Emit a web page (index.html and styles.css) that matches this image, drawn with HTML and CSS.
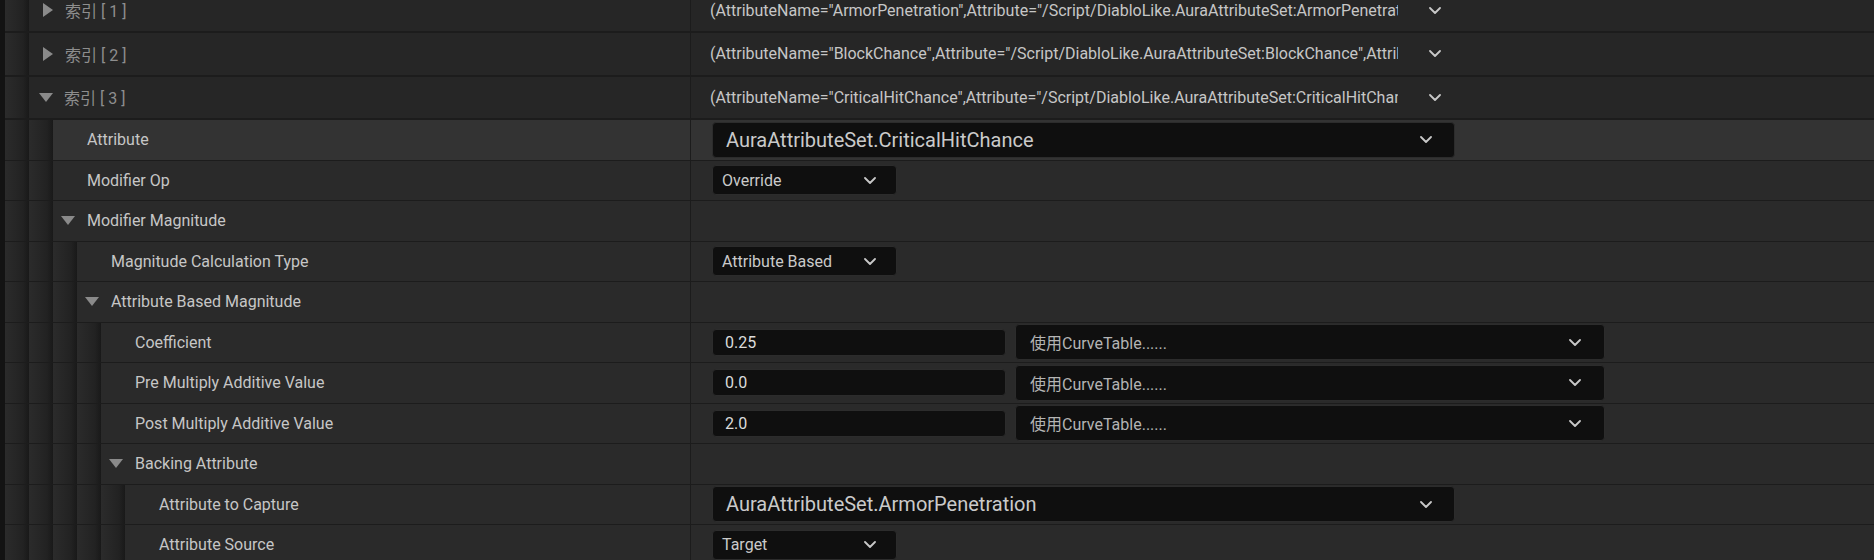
FILE: index.html
```html
<!DOCTYPE html>
<html lang="zh">
<head>
<meta charset="utf-8">
<title>Details</title>
<link rel="stylesheet" href="styles.css">
</head>
<body>
<div class="panel">
  <div class="strip"></div>
  <div class="list">

    <div class="row top">
      <div class="name"><span class="ind"></span><span class="tri-r"></span><span class="label idx">索引 [ 1 ]</span></div>
      <div class="value top-value">
        <div class="summary"><span class="sumtext">(AttributeName="ArmorPenetration",Attribute="/Script/DiabloLike.AuraAttributeSet:ArmorPenetration",AttributeTag=(TagName="Attributes.Secondary.ArmorPenetration"))</span><svg class="chev" viewBox="0 0 12 7"><polyline points="1,1 6,6 11,1"/></svg></div>
      </div>
    </div>

    <div class="row top">
      <div class="name"><span class="ind"></span><span class="tri-r"></span><span class="label idx">索引 [ 2 ]</span></div>
      <div class="value top-value">
        <div class="summary"><span class="sumtext">(AttributeName="BlockChance",Attribute="/Script/DiabloLike.AuraAttributeSet:BlockChance",AttributeTag=(TagName="Attributes.Secondary.BlockChance"))</span><svg class="chev" viewBox="0 0 12 7"><polyline points="1,1 6,6 11,1"/></svg></div>
      </div>
    </div>

    <div class="row top">
      <div class="name"><span class="ind"></span><span class="tri-d idx-tri"></span><span class="label idx">索引 [ 3 ]</span></div>
      <div class="value top-value">
        <div class="summary"><span class="sumtext">(AttributeName="CriticalHitChance",Attribute="/Script/DiabloLike.AuraAttributeSet:CriticalHitChance",AttributeTag=(TagName="Attributes.Secondary.CriticalHitChance"))</span><svg class="chev" viewBox="0 0 12 7"><polyline points="1,1 6,6 11,1"/></svg></div>
      </div>
    </div>

    <div class="row hover">
      <div class="name"><span class="ind"></span><span class="ind"></span><span class="label">Attribute</span></div>
      <div class="value">
        <div class="combo big"><span>AuraAttributeSet.CriticalHitChance</span><svg class="chev" viewBox="0 0 12 7"><polyline points="1,1 6,6 11,1"/></svg></div>
      </div>
    </div>

    <div class="row">
      <div class="name"><span class="ind"></span><span class="ind"></span><span class="label">Modifier Op</span></div>
      <div class="value">
        <div class="combo small"><span>Override</span><svg class="chev" viewBox="0 0 12 7"><polyline points="1,1 6,6 11,1"/></svg></div>
      </div>
    </div>

    <div class="row">
      <div class="name"><span class="ind"></span><span class="ind"></span><span class="tri-d"></span><span class="label">Modifier Magnitude</span></div>
      <div class="value"></div>
    </div>

    <div class="row">
      <div class="name"><span class="ind"></span><span class="ind"></span><span class="ind"></span><span class="label">Magnitude Calculation Type</span></div>
      <div class="value">
        <div class="combo small"><span>Attribute Based</span><svg class="chev" viewBox="0 0 12 7"><polyline points="1,1 6,6 11,1"/></svg></div>
      </div>
    </div>

    <div class="row">
      <div class="name"><span class="ind"></span><span class="ind"></span><span class="ind"></span><span class="tri-d"></span><span class="label">Attribute Based Magnitude</span></div>
      <div class="value"></div>
    </div>

    <div class="row">
      <div class="name"><span class="ind"></span><span class="ind"></span><span class="ind"></span><span class="ind"></span><span class="label">Coefficient</span></div>
      <div class="value">
        <div class="num">0.25</div>
        <div class="combo curve"><span>使用CurveTable......</span><svg class="chev" viewBox="0 0 12 7"><polyline points="1,1 6,6 11,1"/></svg></div>
      </div>
    </div>

    <div class="row">
      <div class="name"><span class="ind"></span><span class="ind"></span><span class="ind"></span><span class="ind"></span><span class="label">Pre Multiply Additive Value</span></div>
      <div class="value">
        <div class="num">0.0</div>
        <div class="combo curve"><span>使用CurveTable......</span><svg class="chev" viewBox="0 0 12 7"><polyline points="1,1 6,6 11,1"/></svg></div>
      </div>
    </div>

    <div class="row">
      <div class="name"><span class="ind"></span><span class="ind"></span><span class="ind"></span><span class="ind"></span><span class="label">Post Multiply Additive Value</span></div>
      <div class="value">
        <div class="num">2.0</div>
        <div class="combo curve"><span>使用CurveTable......</span><svg class="chev" viewBox="0 0 12 7"><polyline points="1,1 6,6 11,1"/></svg></div>
      </div>
    </div>

    <div class="row">
      <div class="name"><span class="ind"></span><span class="ind"></span><span class="ind"></span><span class="ind"></span><span class="tri-d"></span><span class="label">Backing Attribute</span></div>
      <div class="value"></div>
    </div>

    <div class="row">
      <div class="name"><span class="ind"></span><span class="ind"></span><span class="ind"></span><span class="ind"></span><span class="ind"></span><span class="label">Attribute to Capture</span></div>
      <div class="value">
        <div class="combo big"><span>AuraAttributeSet.ArmorPenetration</span><svg class="chev" viewBox="0 0 12 7"><polyline points="1,1 6,6 11,1"/></svg></div>
      </div>
    </div>

    <div class="row">
      <div class="name"><span class="ind"></span><span class="ind"></span><span class="ind"></span><span class="ind"></span><span class="ind"></span><span class="label">Attribute Source</span></div>
      <div class="value">
        <div class="combo small"><span>Target</span><svg class="chev" viewBox="0 0 12 7"><polyline points="1,1 6,6 11,1"/></svg></div>
      </div>
    </div>

  </div>
</div>
</body>
</html>
```

FILE: styles.css
```css
html, body {
  margin: 0;
  padding: 0;
  background: #2a2a2a;
  overflow: hidden;
}
body {
  width: 1874px;
  height: 560px;
  font-family: Roboto, "Noto Sans CJK SC", sans-serif;
  font-size: 16px;
  color: #c6c6c6;
}
.panel {
  display: flex;
  height: 560px;
  overflow: hidden;
}
.strip {
  width: 5px;
  flex: none;
  background: #131313;
}
.list {
  flex: 1;
  display: flex;
  flex-direction: column;
  margin-top: -10.5px;
}
.row {
  display: grid;
  grid-template-columns: 686px 1fr;
  height: 40.5px;
  flex: none;
  box-sizing: border-box;
  border-bottom: 1px solid #1c1c1c;
  background: #2a2a2a;
}
.row.top {
  height: 43.5px;
  border-bottom: 2px solid #1c1c1c;
  background: #262626;
}
.row.hover {
  background: #333333;
}
.name {
  display: flex;
  align-items: center;
  border-right: 1px solid #1c1c1c;
  min-width: 0;
  overflow: hidden;
}
.ind {
  width: 24px;
  flex: none;
  align-self: stretch;
  background: linear-gradient(90deg, #2b2b2b 0%, #262626 45%, #222222 75%, #191919 100%);
}
.label {
  white-space: nowrap;
  margin-left: 34px;
}
.label.idx {
  margin-left: 9px;
  color: #8e8e8e;
}
.tri-r, .tri-d {
  flex: none;
  width: 0;
  height: 0;
}
.tri-r {
  margin-left: 14px;
  margin-right: 3px;
  border-top: 7px solid transparent;
  border-bottom: 7px solid transparent;
  border-left: 10px solid #8a8a8a;
}
.tri-d {
  margin-left: 8px;
  margin-right: -22px;
  border-left: 7.5px solid transparent;
  border-right: 7.5px solid transparent;
  border-top: 9px solid #8a8a8a;
}
.tri-d.idx-tri {
  margin-left: 10px;
  margin-right: 2px;
}
.tri-d + .label {
  margin-left: 34px;
}
.tri-d.idx-tri + .label {
  margin-left: 9px;
}
.value {
  display: flex;
  align-items: center;
  padding-left: 21px;
  min-width: 0;
}
.top-value {
  padding-left: 19px;
}
.summary {
  width: 745px;
  display: flex;
  align-items: center;
  color: #c6c6c6;
  font-size: 16px;
}
.sumtext {
  width: 688px;
  overflow: hidden;
  white-space: nowrap;
  flex: none;
}
.summary .chev {
  margin-left: 31px;
}
.chev {
  width: 12px;
  height: 7px;
  flex: none;
  fill: none;
  stroke: #c8c8c8;
  stroke-width: 1.8;
  stroke-linecap: round;
  stroke-linejoin: round;
}
.combo {
  box-sizing: border-box;
  display: flex;
  align-items: center;
  justify-content: space-between;
  background: #0f0f0f;
  border: 1px solid #2c2c2c;
  border-radius: 4px;
  color: #cacaca;
  white-space: nowrap;
}
.combo.big {
  width: 743px;
  height: 36px;
  padding: 0 22px 0 13px;
  font-size: 20px;
}
.combo.small {
  width: 185px;
  height: 30px;
  padding: 0 20px 0 9px;
}
.combo.curve {
  width: 590px;
  height: 36px;
  padding: 0 23px 0 14px;
  color: #b4b4b4;
}
.num {
  box-sizing: border-box;
  width: 294px;
  height: 27px;
  margin-right: 9px;
  display: flex;
  align-items: center;
  padding-left: 12px;
  background: #0f0f0f;
  border: 1px solid #2c2c2c;
  border-radius: 4px;
  color: #dcdcdc;
}
```
